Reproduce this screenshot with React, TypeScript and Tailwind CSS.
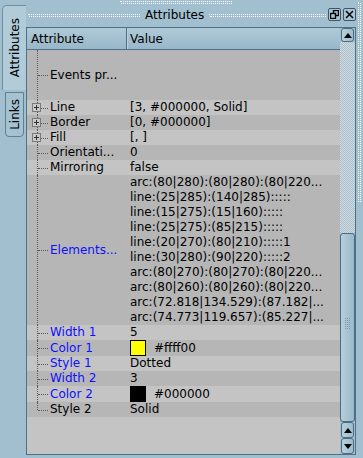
import React from "react";

type Row = {
  label: string;
  value: React.ReactNode;
  h: number;
  blue?: boolean;
  expand?: boolean;
  last?: boolean;
};

const Swatch = ({ color, text }: { color: string; text: string }) => (
  <div className="flex items-center gap-[8px]">
    <span className={`w-[16px] h-[16px] border border-black ${color}`} />
    <span>{text}</span>
  </div>
);

const elements = [
  "arc:(80|280):(80|280):(80|220...",
  "line:(25|285):(140|285):::::",
  "line:(15|275):(15|160):::::",
  "line:(25|275):(85|215):::::",
  "line:(20|270):(80|210):::::1",
  "line:(30|280):(90|220):::::2",
  "arc:(80|270):(80|270):(80|220...",
  "arc:(80|260):(80|260):(80|220...",
  "arc:(72.818|134.529):(87.182|...",
  "arc:(74.773|119.657):(85.227|...",
];

const rows: Row[] = [
  { label: "Events pr...", value: "", h: 50 },
  { label: "Line", value: "[3, #000000, Solid]", h: 15, expand: true },
  { label: "Border", value: "[0, #000000]", h: 15, expand: true },
  { label: "Fill", value: "[, ]", h: 15, expand: true },
  { label: "Orientati...", value: "0", h: 15 },
  { label: "Mirroring", value: "false", h: 15 },
  {
    label: "Elements...",
    value: (
      <div className="flex flex-col">
        {elements.map((e) => (
          <span key={e} className="h-[15px] whitespace-nowrap">
            {e}
          </span>
        ))}
      </div>
    ),
    h: 150,
    blue: true,
  },
  { label: "Width 1", value: "5", h: 15, blue: true },
  { label: "Color 1", value: <Swatch color="bg-[#ffff00]" text="#ffff00" />, h: 16, blue: true },
  { label: "Style 1", value: "Dotted", h: 15, blue: true },
  { label: "Width 2", value: "3", h: 15, blue: true },
  { label: "Color 2", value: <Swatch color="bg-black" text="#000000" />, h: 16, blue: true },
  { label: "Style 2", value: "Solid", h: 15, last: true },
];

const TreeRow = ({ row, dark }: { row: Row; dark: boolean }) => (
  <div
    className={`flex ${dark ? "bg-[#b6b6b6]" : "bg-[#c4c4c4]"}`}
    style={{ height: row.h }}
  >
    <div className="w-[100px] flex items-center relative shrink-0">
      {/* tree lines */}
      <span
        className={`absolute left-[10px] top-0 border-l border-dotted border-[#5a5a5a] ${
          row.last ? "h-1/2" : "bottom-0"
        }`}
      />
      <span className="absolute left-[11px] top-1/2 w-[10px] border-t border-dotted border-[#5a5a5a]" />
      {row.expand && (
        <span className="absolute left-[5px] top-[3px] w-[9px] h-[9px] border border-[#7a7a7a] bg-[#c9c9c9] flex items-center justify-center">
          <span className="absolute w-[5px] h-px bg-[#333]" />
          <span className="absolute w-px h-[5px] bg-[#333]" />
        </span>
      )}
      <span
        className={`pl-[23px] whitespace-nowrap leading-[15px] ${
          row.blue ? "text-[#1010ff]" : "text-black"
        }`}
      >
        {row.label}
      </span>
    </div>
    <div className="flex items-center pl-[3px] leading-[15px] text-black">{row.value}</div>
  </div>
);

const Arrow = ({ up }: { up?: boolean }) => (
  <svg width="8" height="5" viewBox="0 0 8 5">
    <path d={up ? "M0 5 L4 0 L8 5 Z" : "M0 0 L4 5 L8 0 Z"} fill="#000" />
  </svg>
);

const ScrollBtn = ({ up, h }: { up?: boolean; h: string }) => (
  <div
    className={`${h} mx-[1px] rounded-[3px] border border-[#4d6c80] bg-gradient-to-r from-[#b7d0dd] to-[#9dbccd] flex items-center justify-center`}
  >
    <Arrow up={up} />
  </div>
);

const DotsH = ({ className }: { className: string }) => (
  <div className={`flex flex-col gap-px ${className}`}>
    <div className="border-t border-dotted border-white" />
    <div className="border-t border-dotted border-white ml-px" />
  </div>
);

export default function App() {
  return (
    <div className="w-[363px] h-[458px] bg-[#a2bfcf] flex font-['DejaVu_Sans',sans-serif] text-[12px] overflow-hidden">
      {/* tabs */}
      <div className="w-[26px] shrink-0 flex flex-col pt-[5px] pl-[2px]">
        <div className="h-[85px] bg-[#b1cbd9] border-l border-t border-[#6d8da1] rounded-tl-[5px] flex items-center justify-center">
          <span className="[writing-mode:vertical-rl] rotate-180 text-black">Attributes</span>
        </div>
        <div className="mt-[2px] ml-[3px] mr-[2px] h-[45px] bg-[#a5c2d2] border border-[#5f7f93] rounded-b-[4px] flex items-center justify-center">
          <span className="[writing-mode:vertical-rl] rotate-180 text-black">Links</span>
        </div>
      </div>

      {/* main */}
      <div className="w-[330px] shrink-0 flex flex-col">
        <div className="h-[27px] relative flex items-center">
          <div className="absolute top-[1px] left-[94px] w-[112px]">
            <DotsH className="" />
          </div>
          <DotsH className="ml-[2px] w-[112px] mt-[3px]" />
          <span className="px-[5px] mt-[3px] text-black">Attributes</span>
          <DotsH className="flex-1 mt-[3px]" />
          <div className="flex gap-[2px] ml-[2px] mt-[2px]">
            <div className="w-[13px] h-[13px] border border-[#3d5567] rounded-[2px] bg-[#a9c5d4] flex items-center justify-center">
              <svg width="9" height="9" viewBox="0 0 9 9">
                <rect x="3.5" y="0.5" width="5" height="5" fill="none" stroke="#000" strokeWidth="1.4" />
                <rect x="0.5" y="3.5" width="5" height="5" fill="#a9c5d4" stroke="#000" strokeWidth="1.4" />
              </svg>
            </div>
            <div className="w-[13px] h-[13px] border border-[#3d5567] rounded-[2px] bg-[#a9c5d4] flex items-center justify-center">
              <svg width="9" height="9" viewBox="0 0 9 9">
                <path d="M1 1 L8 8 M8 1 L1 8" stroke="#000" strokeWidth="1.5" />
              </svg>
            </div>
          </div>
        </div>

        <div className="h-[428px] border border-[#4f7188] flex">
          <div className="flex-1 flex flex-col bg-[#c4c4c4]">
            <div className="h-[22px] flex border-b border-[#4f7188] bg-[#9fbdcd]">
              <div className="w-[100px] border-r border-[#4f7188] rounded-tl-[3px] bg-gradient-to-b from-[#b0cad8] to-[#98b7c9] flex items-center pl-[4px] text-black">
                Attribute
              </div>
              <div className="flex-1 border-l border-[#b9d0dc] rounded-tr-[3px] bg-gradient-to-b from-[#b0cad8] to-[#98b7c9] flex items-center pl-[2px] text-black">
                Value
              </div>
            </div>
            {rows.map((r, i) => (
              <TreeRow key={r.label} row={r} dark={i % 2 === 0} />
            ))}
          </div>
          {/* scrollbar */}
          <div className="w-[15px] flex flex-col bg-[#a2bfcf]">
            <ScrollBtn up h="h-[14px]" />
            <div className="flex-1 bg-[repeating-conic-gradient(#d2dbe1_0_25%,#a9bfcc_0_50%)] [background-size:2px_2px]" />
            <div className="h-[189px] rounded-[3px] border border-[#4d6c80] bg-gradient-to-r from-[#b6cfdc] to-[#98b8c9] flex flex-col items-center pt-[84px]">
              <div className="grid grid-cols-3 gap-[1px]">
                {Array.from({ length: 18 }).map((_, i) => (
                  <span key={i} className="w-[1px] h-[1px] bg-[#7a98aa]" />
                ))}
              </div>
            </div>
            <ScrollBtn up h="h-[16px]" />
            <ScrollBtn h="h-[16px]" />
          </div>
        </div>
      </div>

      {/* right grip */}
      <div className="flex-1 flex pt-[2px] pl-[2px]">
        <div className="h-[200px] flex gap-px">
          <div className="border-l border-dotted border-white" />
          <div className="border-l border-dotted border-white mt-px" />
        </div>
      </div>
    </div>
  );
}
